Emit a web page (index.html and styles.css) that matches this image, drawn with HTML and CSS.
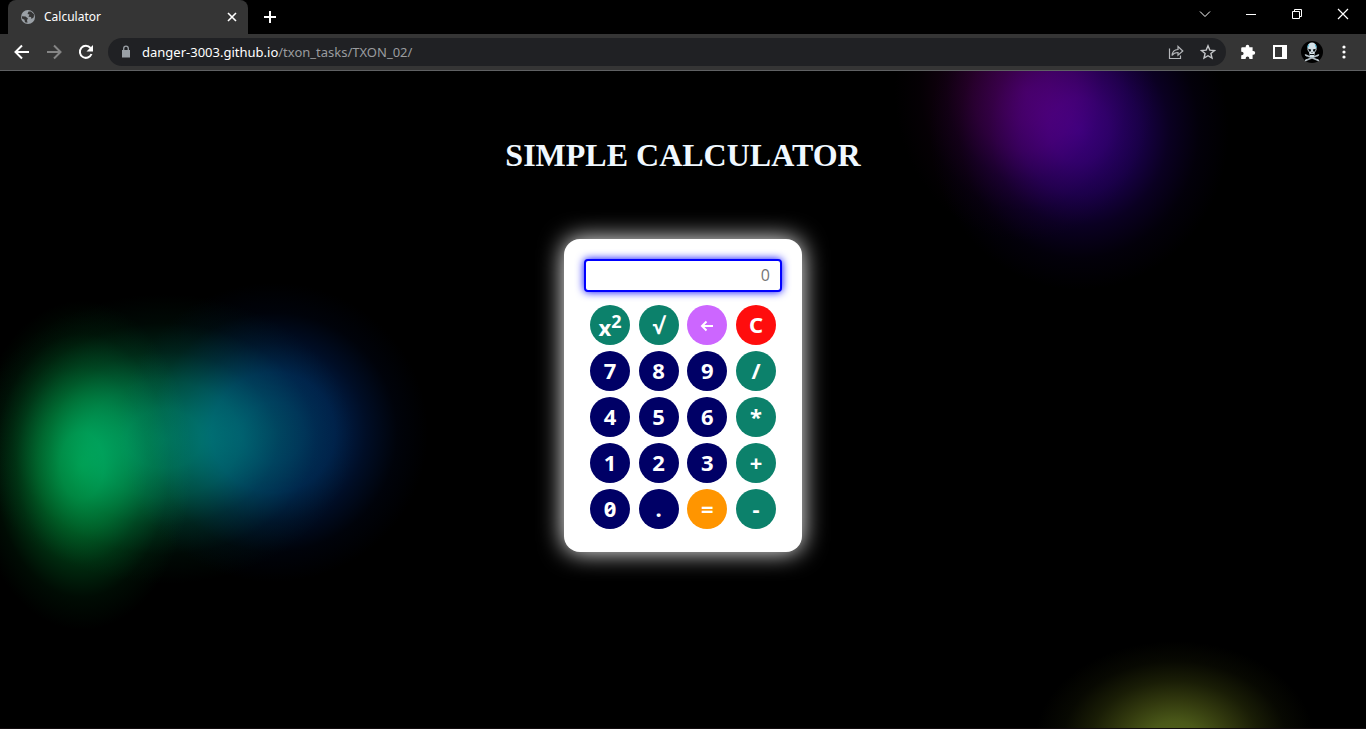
FILE: index.html
```html
<!DOCTYPE html>
<html lang="en">
<head>
<meta charset="utf-8">
<meta name="viewport" content="width=device-width, initial-scale=1">
<title>Calculator</title>
<link rel="stylesheet" href="styles.css">
</head>
<body>
<header class="browser">
  <div class="tab-strip">
    <div class="tab">
      <svg class="favicon" viewBox="0 0 16 16" width="16" height="16" aria-hidden="true"><circle cx="8" cy="8" r="7" fill="#9aa0a6"/><path d="M8.500 2.500L7.500 5l2 .500L8.500 7.800 11 8l.500 2 2.300-1.800.200-3L11 2.500zM1.800 7.200L5.500 7.500 8 9.500l-1 1.500.500 2.800-2.500-.600-.500-2.500-2.500-1.200z" fill="#353535"/></svg>
      <span class="tab-title">Calculator</span>
      <button class="icon-button tab-close" aria-label="Close tab"><svg viewBox="0 0 16 16" width="16" height="16"><path d="M4 4l8 8M12 4l-8 8" stroke="#fff" stroke-width="1.600"/></svg></button>
    </div>
    <button class="icon-button new-tab" aria-label="New tab"><svg viewBox="0 0 16 16" width="16" height="16"><path d="M8 2v12M2 8h12" stroke="#fff" stroke-width="2"/></svg></button>
    <div class="window-controls">
      <button class="icon-button" aria-label="Search tabs"><svg viewBox="0 0 16 16" width="16" height="16"><path d="M3 5.500l5 5 5-5" fill="none" stroke="#fff"/></svg></button>
      <button class="icon-button" aria-label="Minimize"><svg viewBox="0 0 16 16" width="16" height="16"><path d="M3 8.500h10" stroke="#fff"/></svg></button>
      <button class="icon-button" aria-label="Restore"><svg viewBox="0 0 16 16" width="16" height="16"><path d="M3.500 5.500h7v7h-7zM5.500 5.500v-2h7v7h-2" fill="none" stroke="#fff"/></svg></button>
      <button class="icon-button" aria-label="Close"><svg viewBox="0 0 16 16" width="16" height="16"><path d="M3 3l10 10M13 3L3 13" stroke="#fff" stroke-width="1.200"/></svg></button>
    </div>
  </div>
  <div class="toolbar">
    <button class="icon-button nav" aria-label="Back"><svg viewBox="0 0 16 16" width="16" height="16"><path d="M15 8H2M8 1.500L1.500 8 8 14.500" fill="none" stroke="#fff" stroke-width="2"/></svg></button>
    <button class="icon-button nav" aria-label="Forward"><svg viewBox="0 0 16 16" width="16" height="16"><path d="M1 8h13M8 1.500L14.500 8 8 14.500" fill="none" stroke="#858585" stroke-width="2"/></svg></button>
    <button class="icon-button nav" aria-label="Reload"><svg viewBox="0 0 16 16" width="16" height="16"><path d="M13.500 10A6 6 0 1 1 12.500 4" fill="none" stroke="#fff" stroke-width="2"/><path d="M15 1v6.500H8.500z" fill="#fff"/></svg></button>
    <div class="address">
      <svg class="lock" viewBox="0 0 16 16" width="16" height="16" aria-hidden="true"><path d="M4 6h8v7.500H4z" fill="#9aa0a6"/><path d="M5.700 7V4.500a2.300 2.300 0 0 1 4.600 0V7" fill="none" stroke="#9aa0a6" stroke-width="1.300"/></svg>
      <a class="url" href="#"><span class="host">danger-3003.github.io</span>/txon_tasks/TXON_02/</a>
      <button class="icon-button" aria-label="Share"><svg viewBox="0 0 16 16" width="16" height="16"><path d="M1.500 4.500v10h11v-3M4 11.500c.300-4 2.500-5.800 6-6V2.500L14.800 7 10 11.200V8.500c-2.500 0-4.500.700-6 3z" fill="none" stroke="#b5b7ba" stroke-width="1.200"/></svg></button>
      <button class="icon-button" aria-label="Bookmark this tab"><svg viewBox="0 0 16 16" width="16" height="16"><path d="M8 1.800l1.800 4.300 4.700.400-3.600 3 1.100 4.600L8 11.700l-4 2.400 1.100-4.600-3.600-3 4.700-.400z" fill="none" stroke="#c4c6c9" stroke-width="1.400"/></svg></button>
    </div>
    <div class="actions">
      <button class="icon-button" aria-label="Extensions"><svg viewBox="0 0 16 16" width="16" height="16"><path d="M2.300 3.300h3.400V2.600a1.800 1.800 0 0 1 3.600 0v.700h3.300v3.600h.700a1.900 1.900 0 0 1 0 3.800h-.700v4.300H9.300v-.700a1.800 1.800 0 0 0-3.600 0v.700H1.200v-3.700h.600a1.800 1.800 0 0 0 0-3.600h-.600V4.400a1.100 1.100 0 0 1 1.100-1.100z" fill="#fff"/></svg></button>
      <button class="icon-button" aria-label="Side panel"><svg viewBox="0 0 16 16" width="16" height="16"><path d="M1 1h14v14H1zM3 3v10h7V3z" fill="#fff" fill-rule="evenodd"/></svg></button>
      <button class="icon-button avatar" aria-label="Profile"><svg viewBox="0 0 22 22" width="22" height="22"><circle cx="11" cy="11" r="11" fill="#000"/><path d="M4.500 14l13 5.500M17.500 14l-13 5.500" stroke="#aebbc2" stroke-width="1.600"/><path d="M4.200 13.300l1.300 2M17.800 13.300l-1.300 2M4.200 20.200l1.300-2M17.800 20.200l-1.300-2" stroke="#c9d3d8"/><path d="M6.500 6C6.500 0 15.500 0 15.500 6v3L13.800 11.500l-.600 4.500H8.800l-.600-4.500L6.500 9z" fill="#d5e2e8"/><path d="M7.200 7.800l3 .700-.500 2H8zM14.800 7.800l-3 .700.500 2H14zM10.400 12l.600-1.500.600 1.500zM8.800 13h4.400v1H8.800z" fill="#0a1114"/><path d="M6.700 6.500l1-3M15.300 6.500l-1-3" stroke="#3bb4d8"/></svg></button>
      <button class="icon-button" aria-label="Menu"><svg viewBox="0 0 16 16" width="16" height="16" fill="#fff"><circle cx="8" cy="3" r="1.600"/><circle cx="8" cy="8" r="1.600"/><circle cx="8" cy="13" r="1.600"/></svg></button>
    </div>
  </div>
</header>
<main class="page">
  <h1 class="title">SIMPLE CALCULATOR</h1>
  <form class="calculator">
    <input class="display" type="text" placeholder="0" aria-label="Result">
    <div class="keys">
      <button type="button" class="key operator power"><span>x<sup>2</sup></span></button>
      <button type="button" class="key operator root">√</button>
      <button type="button" class="key back" aria-label="Backspace"><svg viewBox="0 0 14 14" width="14" height="14"><path d="M13 8H2.500M6.500 3.500L2 8l4.500 4.500" fill="none" stroke="#fff" stroke-width="2"/></svg></button>
      <button type="button" class="key clear">C</button>
      <button type="button" class="key">7</button>
      <button type="button" class="key">8</button>
      <button type="button" class="key">9</button>
      <button type="button" class="key operator">/</button>
      <button type="button" class="key">4</button>
      <button type="button" class="key">5</button>
      <button type="button" class="key">6</button>
      <button type="button" class="key operator">*</button>
      <button type="button" class="key">1</button>
      <button type="button" class="key">2</button>
      <button type="button" class="key">3</button>
      <button type="button" class="key operator">+</button>
      <button type="button" class="key zero">0</button>
      <button type="button" class="key">.</button>
      <button type="button" class="key equals">=</button>
      <button type="button" class="key operator">-</button>
    </div>
  </form>
</main>
</body>
</html>
```
FILE: styles.css
```css
* { box-sizing: border-box; }

body {
  margin: 0;
  min-height: 100vh;
  display: flex;
  flex-direction: column;
  background: #000;
  font-family: "Noto Sans", "Open Sans", sans-serif;
}

.icon-button {
  display: flex;
  padding: 0;
  border: 0;
  background: none;
}

/* Browser frame */
.browser { border-bottom: 1px solid #5f6163; }

.tab-strip {
  display: flex;
  align-items: center;
  height: 34px;
  padding: 0 15px 0 8px;
  background: #000;
}

.tab {
  display: flex;
  align-items: center;
  gap: 8px;
  width: 240px;
  height: 34px;
  padding: 0 8px 0 12px;
  border-radius: 8px 8px 0 0;
  background: #353535;
}

.tab-title {
  flex: 1;
  color: #fff;
  font-size: 12px;
  line-height: 16px;
}

.new-tab { margin-left: 14px; }

.window-controls {
  display: flex;
  gap: 30px;
  margin: 0 0 6px auto;
}

.toolbar {
  display: flex;
  align-items: center;
  height: 36px;
  padding: 0 14px;
  background: #353535;
}

.nav { margin-right: 16px; }

.address {
  flex: 1;
  display: flex;
  align-items: center;
  gap: 16px;
  height: 28px;
  margin-left: -2px;
  padding: 0 10px;
  border-radius: 14px;
  background: #202124;
}

.lock { margin-right: -8px; }

.url {
  flex: 1;
  color: #9a9c9f;
  font-size: 13px;
  line-height: 20px;
  text-decoration: none;
}

.host { color: #fff; }

.actions {
  display: flex;
  align-items: center;
  gap: 16px;
  margin-left: 14px;
}

.avatar { margin: 0 -3px; }

/* Page */
.page {
  flex: 1;
  display: flex;
  flex-direction: column;
  align-items: center;
  padding: 66px 16px 0;
  border-bottom: 1px solid #120c0e;
  background-color: #000;
  background-image:
    radial-gradient(110px 165px at 6% 60%, rgb(0 132 56), rgb(0 132 56 / .9) 20%, rgb(0 132 50 / .64) 40%, rgb(0 132 46 / .32) 60%, rgb(0 132 40 / .09) 80%, transparent),
    radial-gradient(190px 145px at 12% 56%, rgb(0 104 68), rgb(0 104 68 / .92) 20%, rgb(0 104 66 / .68) 40%, rgb(0 98 60 / .34) 60%, rgb(0 90 50 / .1) 80%, transparent),
    radial-gradient(155px 150px at 20% 55%, rgb(0 42 82), rgb(0 42 88 / .92) 20%, rgb(0 42 100 / .72) 40%, rgb(0 36 100 / .38) 60%, rgb(0 28 100 / .1) 80%, transparent),
    radial-gradient(130px 150px at 75% 3%, rgb(54 0 54), rgb(54 0 50 / .88) 20%, rgb(54 0 48 / .66) 40%, rgb(54 0 48 / .3) 60%, rgb(54 0 48 / .09) 80%, transparent),
    radial-gradient(150px 160px at 79% 9%, rgb(42 0 112), rgb(42 0 112 / .88) 20%, rgb(38 0 112 / .64) 40%, rgb(34 0 112 / .3) 60%, rgb(30 0 112 / .09) 80%, transparent),
    radial-gradient(140px 100px at 86% 102%, rgb(84 100 28), rgb(84 100 28 / .88) 20%, rgb(84 96 24 / .6) 40%, rgb(84 96 20 / .3) 60%, rgb(84 96 20 / .09) 80%, transparent);
  background-blend-mode: screen;
}

.title {
  margin: 0;
  color: aliceblue;
  font: bold 32px/36px "Liberation Serif", serif;
}

.calculator {
  width: 238px;
  margin: 66px 0 32px;
  padding: 20px 20px 23px;
  border-radius: 16px;
  background: #fff;
  box-shadow: 0 0 25px #fff;
}

.display {
  display: block;
  width: 100%;
  height: 33px;
  padding: 0 10px 2px;
  border: 2px solid #00f;
  border-radius: 4px;
  outline: 0;
  background: #fff;
  box-shadow: 0 0 8px #00f;
  font: 16px/20px "Open Sans", sans-serif;
  text-align: right;
}

.display::placeholder { color: #757575; }

.keys {
  display: grid;
  grid-template-columns: repeat(4, 40px);
  justify-content: space-between;
  row-gap: 6px;
  padding: 13px 6px 0;
}

.key {
  display: flex;
  align-items: center;
  justify-content: center;
  height: 40px;
  padding: 0 0 2px;
  border: 0;
  border-radius: 50%;
  background: #000066;
  color: #fff;
  font: bold 22px/26px "Noto Sans", "Open Sans", sans-serif;
}

.key sup {
  font-size: 18px;
  line-height: 0;
}

.zero { font-feature-settings: "zero"; }
.operator { background: #0c816b; }
.power { padding: 3px 0 0; }
.root { padding: 0; }
.back { padding: 0; background: #cc66ff; }
.clear { background: #ff0d0d; }
.equals { background: #ff9500; }
```
